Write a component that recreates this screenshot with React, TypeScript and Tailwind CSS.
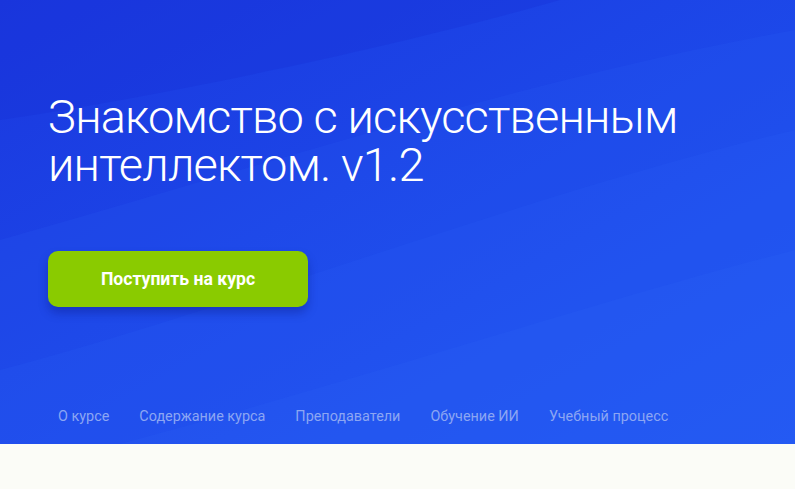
import React from 'react';

const NAV = ['О курсе', 'Содержание курса', 'Преподаватели', 'Обучение ИИ', 'Учебный процесс'];

// decorative diagonal light bands behind the hero
const Waves: React.FC = () => (
    <svg className="absolute inset-0 w-full h-full" viewBox="0 0 795 444" preserveAspectRatio="none">
        <path d="M0 0 H560 C420 40 200 90 0 120 Z" fill="#1832d8" opacity="0.35" />
        <path d="M0 240 C250 170 520 80 795 30 V444 H0 Z" fill="#2a5cf5" opacity="0.18" />
        <path d="M0 370 C260 300 540 190 795 130 V444 H0 Z" fill="#2d62f7" opacity="0.16" />
        <path d="M120 444 C360 380 600 300 795 250 V444 Z" fill="#3068f8" opacity="0.14" />
    </svg>
);

export default function App() {
    return (
        <div className="w-[795px] h-[489px] bg-[#fbfcf7] font-['Roboto','Inter',sans-serif]">
            <section className="relative h-[444px] overflow-hidden bg-gradient-to-br from-[#1b38df] to-[#1f55f2]">
                <Waves />
                <div className="relative flex flex-col h-full pl-[48px]">
                    <h1 className="mt-[93px] text-[47px] leading-[48px] font-light text-white tracking-[-0.85px]">
                        Знакомство с искусственным<br />интеллектом. v1.2
                    </h1>
                    <button className="mt-[62px] w-[260px] h-[56px] rounded-[10px] bg-[#8acb00] text-white text-[17.6px] font-bold shadow-[0_6px_10px_rgba(10,20,120,0.35)]">
                        Поступить на курс
                    </button>
                    <nav className="mt-auto mb-[16px] flex gap-[30px] pl-[10px] text-[14.4px] text-[#8ca6f3]">
                        {NAV.map(item => (
                            <a key={item} className="cursor-pointer">{item}</a>
                        ))}
                    </nav>
                </div>
            </section>
        </div>
    );
}
